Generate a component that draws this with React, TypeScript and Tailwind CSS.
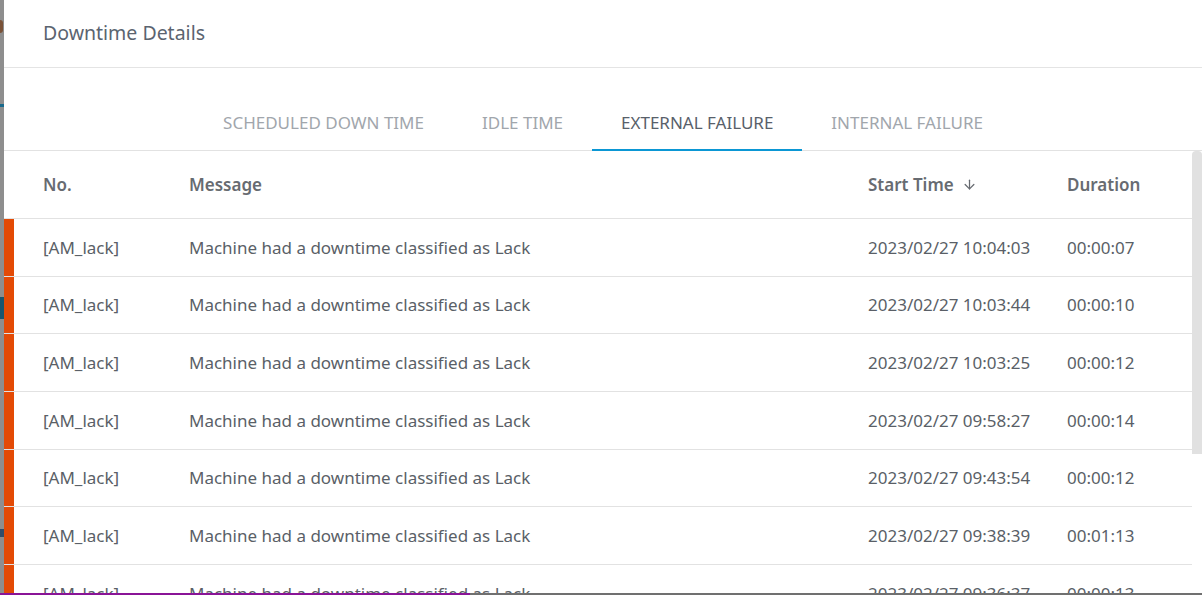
import { ArrowDown } from "lucide-react";

const rows = [
  { no: "[AM_lack]", msg: "Machine had a downtime classified as Lack", start: "2023/02/27 10:04:03", dur: "00:00:07" },
  { no: "[AM_lack]", msg: "Machine had a downtime classified as Lack", start: "2023/02/27 10:03:44", dur: "00:00:10" },
  { no: "[AM_lack]", msg: "Machine had a downtime classified as Lack", start: "2023/02/27 10:03:25", dur: "00:00:12" },
  { no: "[AM_lack]", msg: "Machine had a downtime classified as Lack", start: "2023/02/27 09:58:27", dur: "00:00:14" },
  { no: "[AM_lack]", msg: "Machine had a downtime classified as Lack", start: "2023/02/27 09:43:54", dur: "00:00:12" },
  { no: "[AM_lack]", msg: "Machine had a downtime classified as Lack", start: "2023/02/27 09:38:39", dur: "00:01:13" },
  { no: "[AM_lack]", msg: "Machine had a downtime classified as Lack", start: "2023/02/27 09:36:37", dur: "00:00:13" },
];

const tabs = ["Scheduled Down Time", "Idle Time", "External Failure", "Internal Failure"];

export default function App() {
  return (
    <div className="h-[595px] w-[1202px] overflow-hidden flex flex-col bg-white text-[#5a5f67]" style={{ fontFamily: '"Noto Sans", "Open Sans", sans-serif' }}>
      <div className="flex flex-1 min-h-0">
        {/* backdrop strip */}
        <div className="w-[4px] bg-[#8e8e8e] flex flex-col">
          <div className="h-[20px]" />
          <div className="h-[13px] w-[3px] rounded-r-full bg-[#7a5238]" />
          <div className="h-[71px]" />
          <div className="h-[3px] bg-[#1a6a8c]" />
          <div className="h-[190px]" />
          <div className="h-[22px] bg-[#17566f]" />
          <div className="h-[210px]" />
          <div className="h-[8px] bg-[#2f4d6a]" />
        </div>

        {/* modal */}
        <div className="flex-1 flex flex-col min-w-0">
          <div className="h-[68px] border-b border-[#e4e4e4] flex items-center pl-[39px] pb-[2px]">
            <h2 className="text-[19.5px] text-[#5b6470]">Downtime Details</h2>
          </div>

          <div className="pt-[28px] border-b border-[#e2e2e2] flex justify-center">
            {tabs.map((t, i) => (
              <div
                key={t}
                className={`h-[55px] px-[29px] -mb-px flex items-center uppercase text-[17px] border-b-2 ${
                  i === 2 ? "border-[#0b97d4] text-[#58606a]" : "border-transparent text-[#a1a6ac]"
                }`}
              >
                {t}
              </div>
            ))}
          </div>

          <div className="flex flex-1 min-h-0">
            <div className="flex-1 min-w-0">
              <div className="h-[68px] border-b border-[#e2e2e2] pl-[39px] grid grid-cols-[146px_679px_199px_1fr] items-center text-[17px] font-semibold text-[#676b71]">
                <div>No.</div>
                <div>Message</div>
                <div className="flex items-center gap-[8px]">
                  Start Time <ArrowDown size={15} strokeWidth={2} />
                </div>
                <div>Duration</div>
              </div>
              {rows.map((r, i) => (
                <div key={i} className="h-[57.7px] border-b border-[#e2e2e2] flex">
                  <div className="w-[10px] bg-[#e34a05]" />
                  <div className="flex-1 pl-[29px] grid grid-cols-[146px_679px_199px_1fr] items-center text-[17px]">
                    <div>{r.no}</div>
                    <div>{r.msg}</div>
                    <div>{r.start}</div>
                    <div>{r.dur}</div>
                  </div>
                </div>
              ))}
            </div>
            <div className="w-[10px]">
              <div className="h-[303px] bg-[#e1e1e1] rounded-t-[4px]" />
            </div>
          </div>
        </div>
      </div>
      <div className="h-[2px] flex">
        <div className="w-[470px] bg-[#8a1497]" />
        <div className="flex-1 bg-[#707070]" />
      </div>
    </div>
  );
}
